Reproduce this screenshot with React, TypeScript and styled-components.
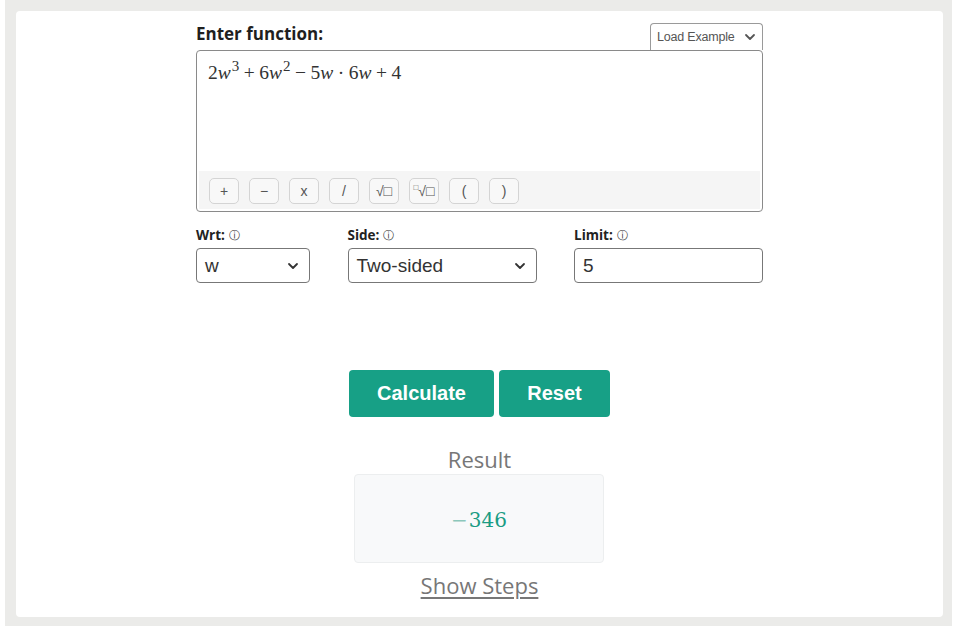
import React from "react";
import styled, { createGlobalStyle } from "styled-components";

const Global = createGlobalStyle`
  html, body { margin: 0; padding: 0; background: #ffffff; }
  body { padding: 0 2px 0 5px; font-family: "Open Sans", "Noto Sans", sans-serif; }
  * { box-sizing: border-box; }
`;

const Frame = styled.div`
  background: #ebebe9;
  padding: 11px 9px 9px 11px;
  height: 626px;
`;

const Card = styled.div`
  background: #ffffff;
  border-radius: 4px;
  height: 606px;
  display: flex;
  justify-content: center;
`;

const Column = styled.div`
  width: 567px;
  display: flex;
  flex-direction: column;
`;

const HeaderRow = styled.div`
  display: flex;
  justify-content: space-between;
  align-items: flex-end;
  height: 39px;
`;

const Title = styled.label`
  font-family: "Open Sans", sans-serif;
  font-weight: 700;
  font-size: 17px;
  color: #1f1f1f;
  margin-bottom: 5px;
`;

const LoadSelect = styled.div`
  width: 113px;
  height: 27px;
  border: 1px solid #9a9a9a;
  border-radius: 4px 4px 0 0;
  border-bottom: none;
  display: flex;
  align-items: center;
  justify-content: space-between;
  padding: 0 6px 0 6px;
  font-family: "Liberation Sans", Arial, sans-serif;
  font-size: 12.5px;
  color: #555;
  letter-spacing: -0.2px;
`;

const Editor = styled.div`
  height: 162px;
  border: 1px solid #8a8a8a;
  border-radius: 4px;
  display: flex;
  flex-direction: column;
  overflow: hidden;
`;

const MathArea = styled.div`
  flex: 1;
  padding: 10px 11px;
  font-family: "Liberation Serif", "Times New Roman", serif;
  font-size: 19.5px;
  color: #333;
  line-height: 24px;
`;

const Var = styled.i`
  font-style: italic;
`;

const Sup = styled.sup`
  font-size: 15px;
  vertical-align: 0;
  position: relative;
  top: -8px;
  margin-left: 1px;
`;

const Op = styled.span`
  margin: 0 4.5px;
`;

const Toolbar = styled.div`
  height: 38px;
  margin: 0 2px 2px 2px;
  background: #f5f5f5;
  display: flex;
  align-items: center;
  gap: 10px;
  padding: 2px 0 0 10px;
`;

const ToolButton = styled.button`
  width: 30px;
  height: 26px;
  border: 1px solid #d4d4d4;
  border-radius: 5px;
  background: #f8f8f8;
  color: #555;
  font-family: "Liberation Sans", Arial, sans-serif;
  font-size: 14px;
  padding: 0;
  display: flex;
  align-items: center;
  justify-content: center;
`;

const FieldsRow = styled.div`
  display: flex;
  justify-content: space-between;
  margin-top: 13px;
`;

const Field = styled.div<{ $w: number }>`
  width: ${(p) => p.$w}px;
  display: flex;
  flex-direction: column;
`;

const FieldLabel = styled.div`
  font-family: "Open Sans", sans-serif;
  font-weight: 700;
  font-size: 13.5px;
  color: #222;
  height: 23px;
  padding-bottom: 3px;
  display: flex;
  align-items: center;
  gap: 4px;
`;

const Info = styled.span`
  font-size: 11px;
  font-weight: 400;
  color: #333;
`;

const Box = styled.div`
  height: 35px;
  border: 1px solid #777;
  border-radius: 4px;
  display: flex;
  align-items: center;
  justify-content: space-between;
  padding: 0 10px 0 8px;
  font-family: "Liberation Sans", Arial, sans-serif;
  font-size: 19px;
  color: #333;
  background: #fff;
`;

const Buttons = styled.div`
  display: flex;
  justify-content: center;
  gap: 5px;
  margin-top: 87px;
`;

const Primary = styled.button<{ $w: number }>`
  width: ${(p) => p.$w}px;
  height: 47px;
  border: none;
  border-radius: 4px;
  background: #17a086;
  color: #fff;
  font-family: "Liberation Sans", Arial, sans-serif;
  font-weight: 700;
  font-size: 20px;
`;

const ResultTitle = styled.div`
  text-align: center;
  margin-top: 28px;
  font-family: "Open Sans", sans-serif;
  font-size: 22px;
  color: #777;
  line-height: 29px;
`;

const ResultBox = styled.div`
  align-self: center;
  width: 250px;
  height: 89px;
  background: #f8f9fa;
  border: 1px solid #eceeef;
  border-radius: 4px;
  display: flex;
  align-items: center;
  justify-content: center;
  font-family: "DejaVu Serif", "Liberation Serif", serif;
  font-size: 20px;
  color: #1a9c84;
  padding-top: 2px;
  margin-right: 1px;
`;

const Minus = styled.span`
  color: #8cc7bb;
  margin-right: 1px;
`;

const Steps = styled.a`
  align-self: center;
  margin-top: 7px;
  font-family: "Open Sans", sans-serif;
  font-size: 22px;
  color: #777;
  text-decoration: underline;
  text-underline-offset: 3px;
`;

const Chevron = ({ size = 12, color = "#333" }: { size?: number; color?: string }) => (
  <svg width={size} height={size} viewBox="0 0 12 12">
    <path d="M2 4 L6 8 L10 4" fill="none" stroke={color} strokeWidth="1.8" strokeLinecap="round" strokeLinejoin="round" />
  </svg>
);

export default function App() {
  const tools = ["+", "−", "x", "/", "√□", "∜□", "(", ")"];
  return (
    <>
      <Global />
      <Frame>
        <Card>
          <Column>
            <HeaderRow>
              <Title>Enter function:</Title>
              <LoadSelect>
                Load Example <Chevron size={12} color="#555" />
              </LoadSelect>
            </HeaderRow>
            <Editor>
              <MathArea>
                2<Var>w</Var><Sup>3</Sup><Op>+</Op>6<Var>w</Var><Sup>2</Sup><Op>−</Op>5<Var>w</Var><Op>·</Op>6<Var>w</Var><Op>+</Op>4
              </MathArea>
              <Toolbar>
                {tools.map((t) => (
                  <ToolButton key={t}>{t === "∜□" ? <span><sup style={{ fontSize: 8 }}>□</sup>√□</span> : t}</ToolButton>
                ))}
              </Toolbar>
            </Editor>
            <FieldsRow>
              <Field $w={114}>
                <FieldLabel>Wrt: <Info>ⓘ</Info></FieldLabel>
                <Box>w <Chevron /></Box>
              </Field>
              <Field $w={189}>
                <FieldLabel>Side: <Info>ⓘ</Info></FieldLabel>
                <Box>Two-sided <Chevron /></Box>
              </Field>
              <Field $w={189}>
                <FieldLabel>Limit: <Info>ⓘ</Info></FieldLabel>
                <Box>5</Box>
              </Field>
            </FieldsRow>
            <Buttons>
              <Primary $w={145}>Calculate</Primary>
              <Primary $w={111}>Reset</Primary>
            </Buttons>
            <ResultTitle>Result</ResultTitle>
            <ResultBox>
              <Minus>−</Minus>346
            </ResultBox>
            <Steps>Show Steps</Steps>
          </Column>
        </Card>
      </Frame>
    </>
  );
}
